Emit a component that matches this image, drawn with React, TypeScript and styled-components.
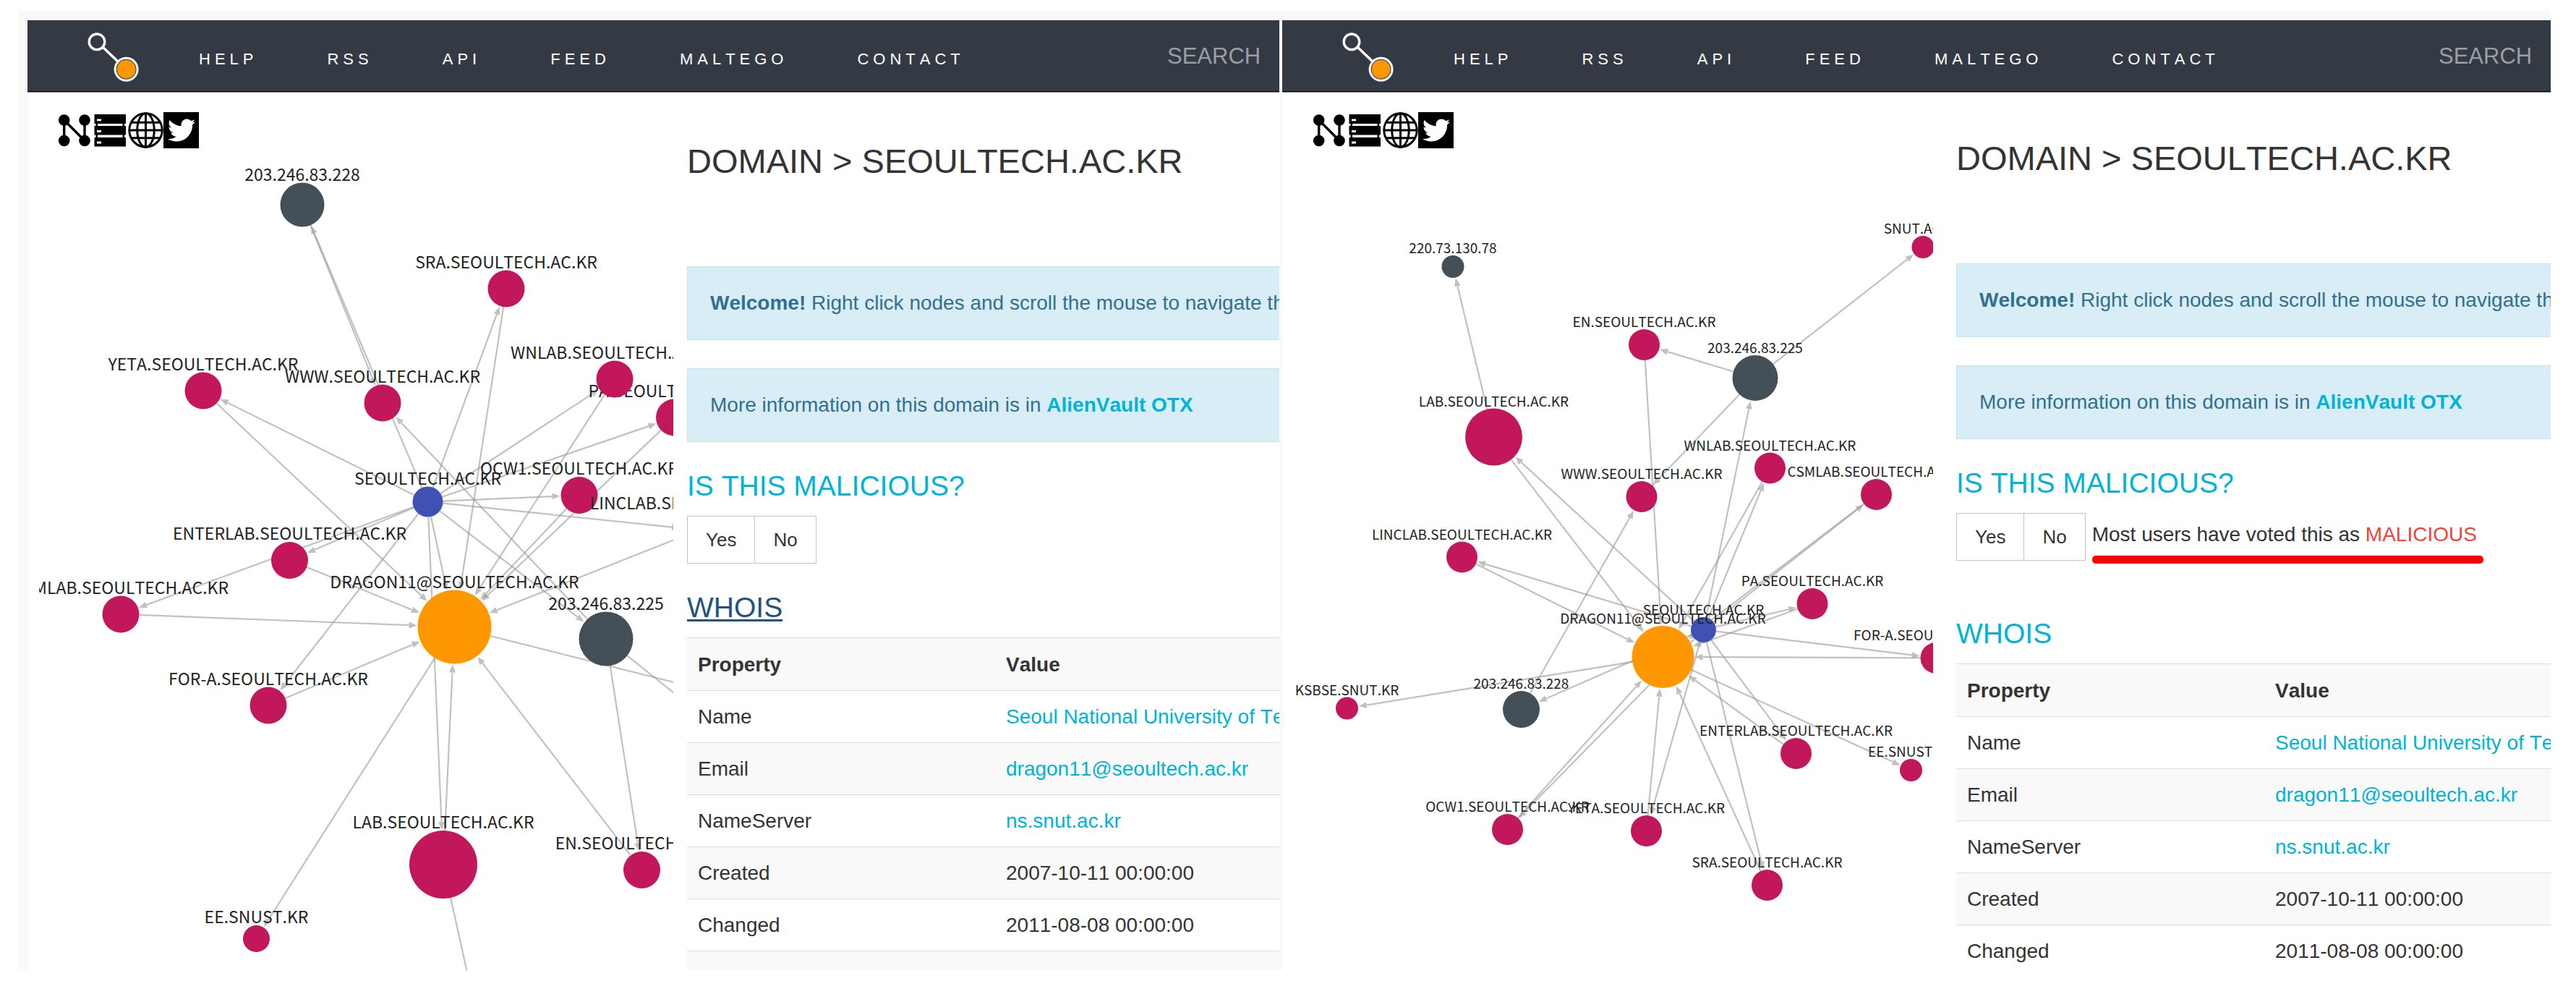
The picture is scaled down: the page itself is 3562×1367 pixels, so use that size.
import React from "react";
import styled, { createGlobalStyle, css } from "styled-components";
import { FaTwitter } from "react-icons/fa";

const color = {
  nav: "#333a44",
  text: "#333333",
  link: "#00b3d9",
  visited: "#23527c",
  rule: "#dddddd",
  stripe: "#f9f9f9",
  domain: "#c2185b",
  ip: "#444f58",
  email: "#ff9800",
  root: "#3f51b5",
};

const GlobalStyle = createGlobalStyle`
  *, *::before, *::after { box-sizing: border-box; }
  body {
    margin: 0;
    background: #ffffff;
    color: ${color.text};
    font-family: "Liberation Sans", Arial, sans-serif;
    font-size: 28px;
    font-kerning: none;
    line-height: 43px;
  }
`;

const Frame = styled.main`
  display: grid;
  grid-template-columns: minmax(0, 1731fr) minmax(0, 1754fr);
  column-gap: 4px;
  height: calc(100vh - 41px);
  margin: 15px 35px 26px 25px;
  padding: 13px 0 0 13px;
  background: ${color.stripe};
`;

const Panel = styled.section`
  display: flex;
  flex-direction: column;
  min-height: 0;
  overflow: hidden;
  background: #ffffff;
`;

const NavBar = styled.header`
  display: flex;
  flex: none;
  align-items: center;
  height: 100px;
  padding-left: 83px;
  background: ${color.nav};
  border-bottom: 1px solid #8c8c8c;
  box-shadow: inset 0 -1px #000000;
`;

const LogoLink = styled.a`
  display: block;
  height: 69px;
  margin: 4px 82px 0 0;
`;

const Menu = styled.nav`
  display: flex;
  gap: 96px;
  padding-top: 8px;
`;

const MenuLink = styled.a`
  color: #ffffff;
  font-size: 22px;
  line-height: 32px;
  letter-spacing: 6px;
  text-decoration: none;
`;

const SearchBox = styled.input`
  width: 155px;
  height: 48px;
  margin-left: auto;
  padding: 0;
  border: 0;
  background: transparent;
  color: #ffffff;
  font-family: inherit;
  font-size: 31px;
  appearance: none;
  outline: none;
  &::placeholder {
    color: #9b9ea2;
    opacity: 1;
  }
`;

const Body = styled.div<{ $wide?: boolean }>`
  display: grid;
  flex: 1;
  min-height: 0;
  grid-template-columns: ${(p) =>
    p.$wide ? "minmax(0, 884fr) minmax(0, 822fr)" : "minmax(0, 877fr) minmax(0, 819fr)"};
  column-gap: ${(p) => (p.$wide ? 32 : 19)}px;
  padding-left: 16px;
`;

const GraphColumn = styled.div`
  display: flex;
  flex-direction: column;
  min-height: 0;
  padding-top: 27px;
`;

const IconRow = styled.div`
  display: flex;
  flex: none;
  padding-left: 25px;
`;

const IconLink = styled.a<{ $filled?: boolean }>`
  display: flex;
  align-items: center;
  justify-content: center;
  width: 49px;
  height: 50px;
  color: ${(p) => (p.$filled ? "#ffffff" : "#000000")};
  background: ${(p) => (p.$filled ? "#000000" : "transparent")};
`;

const GraphCanvas = styled.svg`
  display: block;
  flex: 1;
  width: 100%;
  min-height: 0;
`;

const NodeLabel = styled.text`
  fill: #222222;
  font-family: "Noto Sans CJK JP", "Noto Sans", sans-serif;
  text-anchor: middle;
`;

const Info = styled.div<{ $top: number }>`
  min-height: 0;
  padding-top: ${(p) => p.$top}px;
  overflow: hidden;
  white-space: nowrap;
`;

const Title = styled.h1`
  margin: 0 0 120px;
  font-size: 47px;
  font-weight: 400;
  line-height: 50px;
`;

const Notice = styled.p`
  margin: 0 0 39px;
  padding: 28px 31px 29px;
  border: 1px solid #bce8f1;
  border-right: 0;
  background: #d9edf7;
  color: #31708f;
`;

const NoticeLink = styled.a`
  color: ${color.link};
  font-weight: 700;
  text-decoration: none;
`;

const Heading = styled.h3`
  margin: 40px 0 20px;
  color: ${color.link};
  font-size: 39px;
  font-weight: 400;
  line-height: 42px;
`;

const HeadingLink = styled.a<{ $active?: boolean }>`
  color: ${color.link};
  text-decoration: none;
  ${(p) =>
    p.$active &&
    css`
      color: ${color.visited};
      text-decoration: underline;
      text-decoration-thickness: 3px;
      text-underline-offset: 3px;
    `}
`;

const VoteRow = styled.div<{ $space: number }>`
  display: flex;
  align-items: flex-start;
  height: 66px;
  margin-bottom: ${(p) => p.$space}px;
`;

const VoteButton = styled.button`
  height: 66px;
  padding: 0 25px;
  border: 1px solid #c4c4c4;
  border-radius: 0;
  background: #ffffff;
  color: ${color.text};
  font-family: inherit;
  font-size: 26px;
  & + & {
    margin-left: -1px;
  }
`;

const Verdict = styled.div`
  margin-left: 9px;
  padding-top: 10px;
  line-height: 40px;
  &::after {
    content: "";
    display: block;
    height: 11px;
    margin-top: 9px;
    border-radius: 5px;
    background: #ff0000;
  }
`;

const VerdictWord = styled.span`
  padding-right: 9px;
  color: #f44336;
`;

const Table = styled.table`
  min-width: 100%;
  border-spacing: 0;
  text-align: left;
`;

const Row = styled.tr`
  &:nth-child(odd) {
    background: ${color.stripe};
  }
`;

const cell = css`
  padding: 14px 15px;
  border-top: 1px solid ${color.rule};
  &:first-child {
    min-width: 426px;
  }
`;

const HeadCell = styled.th`
  ${cell}
  height: 73px;
`;

const Cell = styled.td`
  ${cell}
  height: 72px;
`;

const ValueLink = styled.a`
  color: ${color.link};
  text-decoration: none;
`;

const menuItems = ["HELP", "RSS", "API", "FEED", "MALTEGO", "CONTACT"];

const whois: { property: string; value: string; linked?: boolean }[] = [
  { property: "Name", value: "Seoul National University of Technology", linked: true },
  { property: "Email", value: "dragon11@seoultech.ac.kr", linked: true },
  { property: "NameServer", value: "ns.snut.ac.kr", linked: true },
  { property: "Created", value: "2007-10-11 00:00:00" },
  { property: "Changed", value: "2011-08-08 00:00:00" },
];

interface GraphNode {
  id: string;
  label: string;
  fill: string;
  x: number;
  y: number;
  r: number;
}

const kinds: Record<string, [string, string]> = {
  ip225: ["203.246.83.225", color.ip],
  ip228: ["203.246.83.228", color.ip],
  ip220: ["220.73.130.78", color.ip],
  root: ["SEOULTECH.AC.KR", color.root],
  mail: ["DRAGON11@SEOULTECH.AC.KR", color.email],
  pa: ["PA.SEOULTECH.AC.KR", color.domain],
  wnlab: ["WNLAB.SEOULTECH.AC.KR", color.domain],
  ocw1: ["OCW1.SEOULTECH.AC.KR", color.domain],
  linclab: ["LINCLAB.SEOULTECH.AC.KR", color.domain],
  sra: ["SRA.SEOULTECH.AC.KR", color.domain],
  yeta: ["YETA.SEOULTECH.AC.KR", color.domain],
  www: ["WWW.SEOULTECH.AC.KR", color.domain],
  enterlab: ["ENTERLAB.SEOULTECH.AC.KR", color.domain],
  csmlab: ["CSMLAB.SEOULTECH.AC.KR", color.domain],
  fora: ["FOR-A.SEOULTECH.AC.KR", color.domain],
  lab: ["LAB.SEOULTECH.AC.KR", color.domain],
  en: ["EN.SEOULTECH.AC.KR", color.domain],
  ee: ["EE.SNUST.KR", color.domain],
  ksbse: ["KSBSE.SNUT.KR", color.domain],
  snut: ["SNUT.AC.KR", color.domain],
};

type Places = Record<string, [number, number, number]>;

const leftPlaces: Places = {
  ip225: [838, 883, 37.5],
  ip228: [418, 283, 30.5],
  ip220: [676, 1480, 19],
  root: [591.5, 693.5, 21],
  mail: [628.5, 866.5, 51],
  pa: [932.5, 577, 25.5],
  wnlab: [850, 524, 25.5],
  ocw1: [801, 684.5, 25.5],
  linclab: [966.5, 732.5, 25.5],
  sra: [700, 399, 25.5],
  yeta: [281, 540, 25.5],
  www: [529, 557, 25.5],
  enterlab: [400.5, 774.5, 25.5],
  csmlab: [167, 849, 25.5],
  fora: [371, 975, 25.5],
  lab: [613, 1195, 47],
  en: [887.5, 1202.5, 25.5],
  ee: [354.5, 1297.5, 18.5],
  ksbse: [1100, 985.5, 18.5],
  snut: [1100, 1092, 18.5],
};

const rightPlaces: Places = {
  ip225: [2427, 522.5, 31.5],
  ip228: [2103.5, 980.5, 25.5],
  ip220: [2009, 368.5, 15.5],
  root: [2355.5, 870.5, 17.5],
  mail: [2299.5, 908, 43],
  pa: [2506, 834.5, 21.5],
  wnlab: [2447.5, 647, 21.5],
  ocw1: [2084.5, 1146.5, 21.5],
  linclab: [2021.5, 770, 21.5],
  sra: [2443.5, 1223.5, 21.5],
  yeta: [2276.5, 1148.5, 21.5],
  www: [2270, 686.5, 21.5],
  enterlab: [2483.5, 1041.5, 21.5],
  csmlab: [2594.5, 683.5, 21.5],
  fora: [2677, 909.5, 21.5],
  lab: [2065.5, 604, 39.5],
  en: [2273.5, 476.5, 21.5],
  ee: [2642.5, 1064.5, 15.5],
  ksbse: [1862.5, 979, 15.5],
  snut: [2659, 341.5, 15.5],
};

const edges: [string, string][] = [
  ["root", "yeta"], ["yeta", "mail"],
  ["root", "ip228"], ["ip228", "www"],
  ["root", "ip225"], ["ip225", "www"], ["ip225", "en"], ["ip225", "snut"],
  ["root", "sra"], ["sra", "mail"],
  ["root", "wnlab"], ["wnlab", "mail"],
  ["root", "pa"], ["pa", "mail"],
  ["root", "ocw1"], ["ocw1", "mail"],
  ["root", "linclab"], ["linclab", "mail"],
  ["root", "enterlab"], ["enterlab", "mail"],
  ["root", "csmlab"], ["csmlab", "mail"],
  ["root", "fora"], ["fora", "mail"],
  ["root", "lab"], ["lab", "mail"], ["lab", "ip220"],
  ["root", "mail"], ["en", "mail"],
  ["mail", "ee"], ["mail", "ksbse"],
];

function Edge({ from, to }: { from: GraphNode; to: GraphNode }) {
  const dx = to.x - from.x;
  const dy = to.y - from.y;
  const length = Math.hypot(dx, dy);
  const ux = dx / length;
  const uy = dy / length;
  const startX = from.x + ux * from.r;
  const startY = from.y + uy * from.r;
  const tipX = to.x - ux * (to.r + 1);
  const tipY = to.y - uy * (to.r + 1);
  const backX = tipX - ux * 11;
  const backY = tipY - uy * 11;
  return (
    <g opacity={0.6}>
      <line x1={startX} y1={startY} x2={backX} y2={backY} stroke="#999999" strokeWidth={2.2} />
      <polygon
        fill="#999999"
        points={`${tipX},${tipY} ${backX - uy * 4.5},${backY + ux * 4.5} ${backX + uy * 4.5},${backY - ux * 4.5}`}
      />
    </g>
  );
}

function Graph({ places, view, fontSize }: { places: Places; view: string; fontSize: number }) {
  const nodes: GraphNode[] = Object.keys(kinds).map((id) => ({
    id,
    label: kinds[id][0],
    fill: kinds[id][1],
    x: places[id][0],
    y: places[id][1],
    r: places[id][2],
  }));
  const find = (id: string) => nodes.find((n) => n.id === id) as GraphNode;
  return (
    <GraphCanvas viewBox={view} preserveAspectRatio="xMinYMin slice">
      {edges.map(([a, b]) => (
        <Edge key={a + b} from={find(a)} to={find(b)} />
      ))}
      {nodes.map((n) => (
        <g key={n.id}>
          <circle cx={n.x} cy={n.y} r={n.r} fill={n.fill} />
          <NodeLabel x={n.x} y={n.y - n.r - 3} fontSize={fontSize}>
            {n.label}
          </NodeLabel>
        </g>
      ))}
    </GraphCanvas>
  );
}

const Logo = () => (
  <svg width="72" height="69" viewBox="0 0 72 69">
    <line x1="21" y1="20" x2="43" y2="41" stroke="#ffffff" strokeWidth="3.5" />
    <circle cx="13" cy="12.8" r="10.8" fill="none" stroke="#ffffff" strokeWidth="3.4" />
    <circle cx="53.6" cy="50.8" r="17" fill="#ffffff" />
    <circle cx="53.6" cy="50.8" r="13.4" fill="#ff9800" stroke="#4a4a4a" strokeWidth="1.2" />
  </svg>
);

const NetworkIcon = () => (
  <svg width="49" height="50" viewBox="1 0 49 50">
    <path d="M10.7 11V39.5M39 11V39.5M10.7 11L39 39.5" stroke="#000000" strokeWidth="3.4" fill="none" />
    <circle cx="10.7" cy="11" r="7.8" />
    <circle cx="39" cy="11" r="7.8" />
    <circle cx="10.7" cy="39.5" r="7.8" />
    <circle cx="39" cy="39.5" r="7.8" />
  </svg>
);

const ServerIcon = () => (
  <svg width="49" height="50" viewBox="1 0 49 50">
    <path d="M3.5 3H47V16H3.5ZM3.5 19H47V31.5H3.5ZM3.5 35H47V47.5H3.5Z" />
    <path d="M5.5 10H8V40H5.5ZM42.5 10H45V40H42.5Z" />
    <path d="M7 9.5H13V12.3H7ZM7 25H13V28H7ZM7 40.5H13V43.5H7Z" fill="#ffffff" />
  </svg>
);

const GlobeIcon = () => (
  <svg width="49" height="50" viewBox="0 0 50 50" preserveAspectRatio="none">
    <g fill="none" stroke="#000000" strokeWidth="3">
      <circle cx="25" cy="25" r="23.2" />
      <ellipse cx="25" cy="25" rx="12" ry="23.2" />
      <path d="M25 1V49M1 25H49M4.5 14.3H45.5M4.5 35.7H45.5" />
    </g>
  </svg>
);

interface PanelProps {
  name: string;
  places: Places;
  view: string;
  fontSize: number;
  wide?: boolean;
  whoisActive?: boolean;
  voted?: boolean;
}

function DomainPanel({ name, places, view, fontSize, wide, whoisActive, voted }: PanelProps) {
  return (
    <Panel>
      <NavBar>
        <LogoLink href="#" aria-label="Home">
          <Logo />
        </LogoLink>
        <Menu>
          {menuItems.map((item) => (
            <MenuLink key={item} href="#">
              {item}
            </MenuLink>
          ))}
        </Menu>
        <SearchBox id={`search-${name}`} type="text" placeholder="SEARCH" aria-label="Search" />
      </NavBar>
      <Body $wide={wide}>
        <GraphColumn>
          <IconRow>
            <IconLink href="#" aria-label="Graph"><NetworkIcon /></IconLink>
            <IconLink href="#" aria-label="Servers"><ServerIcon /></IconLink>
            <IconLink href="#" aria-label="Domains"><GlobeIcon /></IconLink>
            <IconLink href="#" aria-label="Twitter" $filled><FaTwitter size={38} /></IconLink>
          </IconRow>
          <Graph places={places} view={view} fontSize={fontSize} />
        </GraphColumn>
        <Info $top={wide ? 66 : 70}>
          <Title>DOMAIN &gt; SEOULTECH.AC.KR</Title>
          <Notice>
            <strong>Welcome!</strong> Right click nodes and scroll the mouse to navigate the graph.
          </Notice>
          <Notice>
            More information on this domain is in <NoticeLink href="#">AlienVault OTX</NoticeLink>
          </Notice>
          <Heading>IS THIS MALICIOUS?</Heading>
          <VoteRow $space={voted ? 80 : 40}>
            <VoteButton type="button">Yes</VoteButton>
            <VoteButton type="button">No</VoteButton>
            {voted && (
              <Verdict>
                Most users have voted this as <VerdictWord>MALICIOUS</VerdictWord>
              </Verdict>
            )}
          </VoteRow>
          <Heading>
            <HeadingLink href="#" $active={whoisActive}>WHOIS</HeadingLink>
          </Heading>
          <Table>
            <tbody>
              <Row>
                <HeadCell scope="col">Property</HeadCell>
                <HeadCell scope="col">Value</HeadCell>
              </Row>
              {whois.map((row) => (
                <Row key={row.property}>
                  <Cell>{row.property}</Cell>
                  <Cell>{row.linked ? <ValueLink href="#">{row.value}</ValueLink> : row.value}</Cell>
                </Row>
              ))}
              <Row>
                <Cell />
                <Cell />
              </Row>
            </tbody>
          </Table>
        </Info>
      </Body>
    </Panel>
  );
}

export default function App() {
  return (
    <>
      <GlobalStyle />
      <Frame>
        <DomainPanel name="before" places={leftPlaces} view="54 205 877 1136" fontSize={23} whoisActive />
        <DomainPanel name="after" places={rightPlaces} view="1789 205 884 1136" fontSize={19} wide voted />
      </Frame>
    </>
  );
}
